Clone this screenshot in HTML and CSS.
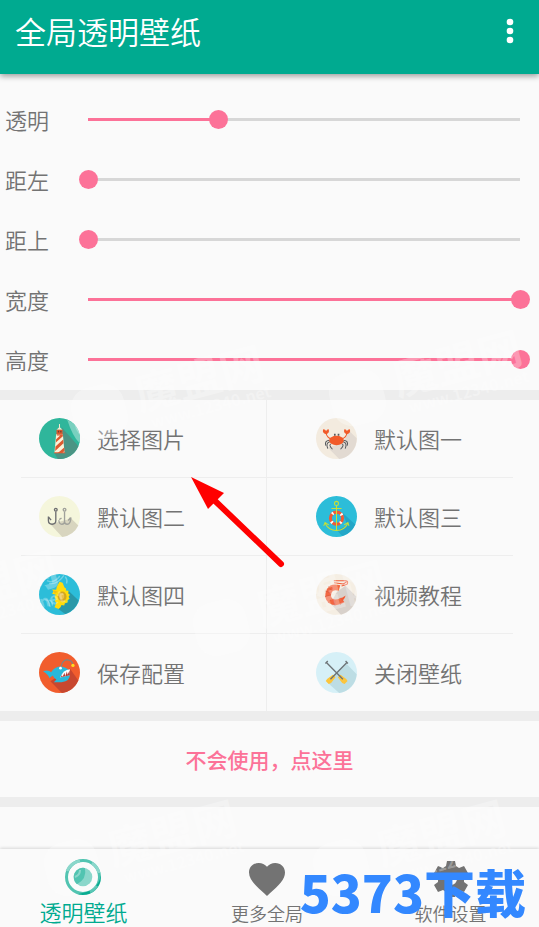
FILE: index.html
```html
<!DOCTYPE html>
<html lang="zh-CN">
<head>
<meta charset="UTF-8">
<meta name="viewport" content="width=device-width, initial-scale=1.0">
<title>全局透明壁纸</title>
<link rel="stylesheet" href="styles.css">
</head>
<body>

<header class="topbar">
  <h1 class="title">全局透明壁纸</h1>
  <button class="more" aria-label="更多">
    <svg width="8" height="28" viewBox="0 0 8 28"><circle cx="4" cy="5" r="3.3"/><circle cx="4" cy="14" r="3.3"/><circle cx="4" cy="23" r="3.3"/></svg>
  </button>
</header>

<main class="content">
  <!-- sliders -->
  <section class="sliders">
    <div class="slider-row"><label for="alpha">透明</label><input type="range" id="alpha" min="0" max="100" value="30" style="--v:.3"></div>
    <div class="slider-row"><label for="left">距左</label><input type="range" id="left" min="0" max="100" value="0" style="--v:0"></div>
    <div class="slider-row"><label for="top">距上</label><input type="range" id="top" min="0" max="100" value="0" style="--v:0"></div>
    <div class="slider-row"><label for="width">宽度</label><input type="range" id="width" min="0" max="100" value="100" style="--v:1"></div>
    <div class="slider-row"><label for="height">高度</label><input type="range" id="height" min="0" max="100" value="100" style="--v:1"></div>
  </section>

  <!-- action grid -->
  <section class="panel">
    <div class="grid">
      <button class="item">
        <svg class="icon" viewBox="0 0 122 122">
          <circle cx="61" cy="61" r="61" fill="#2fb69b"/>
          <path d="M68 28 L117 83 A61 61 0 0 1 56 122 L46 104 L74 100Z" fill="#4b9484"/>
          <path d="M84 5 A61 61 0 0 1 121 75 Q100 55 84 5Z" fill="#79d0bf"/>
          <path d="M61 18v14" stroke="#f3ead0" stroke-width="3"/>
          <path d="M52 35l9-8 9 8z" fill="#f3ead0"/>
          <path d="M52 35h18v13H52z" fill="#e05a2e"/>
          <path d="M56 38h4v5h-4zM63 38h4v5h-4z" fill="#6b4135"/>
          <path d="M51 48h20l5 56H46z" fill="#fbf3d9"/>
          <path d="M53 48h18v6L50 73l1-10 12-11H53zM72 64l1 11-25 23 1-13zM75 88l1 10-7 6H56z" fill="#dd5a30"/>
          <path d="M45 102h33v3H45z" fill="#e05a2e"/>
        </svg>
        <span>选择图片</span>
      </button>
      <button class="item">
        <svg class="icon" viewBox="0 0 122 122">
          <circle cx="61" cy="61" r="61" fill="#f3ebdf"/>
          <path d="M96 36l25 24A61 61 0 0 1 69 122L35 88l48-14z" fill="#e2dad2"/>
          <path d="M47 63Q32 58 30 45M76 63Q90 58 92 45" stroke="#f15a29" stroke-width="3" fill="none"/>
          <path d="M21 34q5-2 9 5 4-7 8-5 3 11-8 14-12-3-9-14zM84 34q5-2 8 5 5-7 9-5 3 11-9 14-11-3-8-14z" fill="#f15a29"/>
          <path d="M56 47v6M67 47v6" stroke="#55585c" stroke-width="5"/>
          <ellipse cx="61" cy="67" rx="22" ry="14" fill="#f15a29"/>
          <path d="M39 66q-14 2-10 16M41 71q-13 3-6 20M45 77q-9 3 4 16M83 66q14 2 10 16M81 71q13 3 6 20M77 77q9 3-4 16" stroke="#55585c" stroke-width="3" fill="none"/>
        </svg>
        <span>默认图一</span>
      </button>
      <button class="item">
        <svg class="icon" viewBox="0 0 122 122">
          <circle cx="61" cy="61" r="61" fill="#f5f6dc"/>
          <path d="M96 67l21 21A61 61 0 0 1 69 122L34 84z" fill="#d8d5bf"/>
          <g fill="none" stroke-width="4">
            <g stroke="#6d6e70"><circle cx="50" cy="41" r="4"/><path d="M50 46v28q0 10-11 10T28 73V61M28 62l8 10"/></g>
            <g stroke="#a0a19b"><circle cx="76" cy="41" r="4"/><path d="M76 46v37M59 72q1 12 9 12t8-8q0 8 8 8 10 0 11-20M94 64l-7 9M60 70l7-4"/></g>
          </g>
        </svg>
        <span>默认图二</span>
      </button>
      <button class="item">
        <svg class="icon" viewBox="0 0 122 122">
          <circle cx="61" cy="61" r="61" fill="#2cbdd9"/>
          <path d="M78 49l39 36A61 61 0 0 1 78 119L62 102l32-14z" fill="#23a6c7"/>
          <circle cx="61" cy="66" r="18" fill="none" stroke="#f15a34" stroke-width="9"/>
          <circle cx="61" cy="66" r="18" fill="none" stroke="#fff" stroke-width="9" stroke-dasharray="5 23.27" stroke-dashoffset="-11.6"/>
          <g fill="none" stroke="#c9df35" stroke-width="3"><circle cx="61" cy="22" r="6"/><path d="M61 28v76M46 37h30M27 81q10 21 34 22 24-1 34-22M23 89l4-10 11 7M84 86l11-7 3 10"/></g>
        </svg>
        <span>默认图三</span>
      </button>
      <button class="item">
        <svg class="icon" viewBox="0 0 122 122">
          <circle cx="61" cy="61" r="61" fill="#2cbdd9"/>
          <path d="M86 48l32 31A61 61 0 0 1 78 119L49 98l38-15z" fill="#2998a8"/>
          <path d="M24 20q20 10 38-14M30 28q26 4 44-24M78 8q8 10 4 20" stroke="#71d2e5" stroke-width="4" fill="none"/>
          <path d="M17 78q12-6 16 20M30 78q10 0 10 16" stroke="#71d2e5" stroke-width="4" fill="none"/>
          <path d="M61 23l9 3 6 14 5 4-1 5 8 1-1 8 5 4-4 6 3 6-6 4 0 7-8 2-2 7-8-2-3 7-6 5-12-5 4-9 2-5-5-4 3-6-4-6 4-7-11-3 4-7-4-6 12 1 2-9z" fill="#ffdb0b"/>
          <path d="M42 48l14 5-9 6z" fill="#efbd1d"/>
          <ellipse cx="69" cy="67" rx="13" ry="15" fill="#d3a623"/>
          <ellipse cx="68" cy="66" rx="7" ry="9" fill="#e9c04a"/>
        </svg>
        <span>默认图四</span>
      </button>
      <button class="item">
        <svg class="icon" viewBox="0 0 122 122">
          <circle cx="61" cy="61" r="61" fill="#f5eee3"/>
          <path d="M88 35l32 32A61 61 0 0 1 74 121L43 88l20-36z" fill="#d8d1cb"/>
          <path d="M70 42Q48 36 40 49q-10 20 4 31 16 10 36-3" stroke="#f26743" stroke-width="17" fill="none"/>
          <path d="M37 37l10 13M28 51l18 5M27 67l18-4M36 86l11-14M56 94l1-17M73 91l-6-15" stroke="#d5583a" stroke-width="2"/>
          <path d="M53 20h36q9 2 3 11L76 36M54 26l27 4 10-7" stroke="#f05c39" stroke-width="3" fill="none"/>
          <path d="M74 73l14-9q-1 9-10 17z" fill="#f15a34"/>
        </svg>
        <span>视频教程</span>
      </button>
      <button class="item">
        <svg class="icon" viewBox="0 0 122 122">
          <circle cx="61" cy="61" r="61" fill="#f15d2d"/>
          <path d="M92 49l25 36A61 61 0 0 1 68 122L34 87z" fill="#c8472f"/>
          <path d="M12 57q16-5 24 3 10-17 30-17 25 4 26 22 2 22-25 25H44l8-8q-8-4-11-12l-10 7q-2-9-19-20z" fill="#29b9db"/>
          <path d="M92 51Q72 52 63 76l28-7z" fill="#fff"/>
          <path d="M91 55l-6 13-2-10-5 14-2-10-6 12-2-5 3-7-6 13 27-6z" fill="#b83b35"/>
          <path d="M66 42q4-18 17-19 16 1 17 14" stroke="#6c8c90" stroke-width="3" fill="none"/>
          <circle cx="101" cy="40" r="5" fill="#ffdc20"/><circle cx="64" cy="48" r="4" fill="#fff"/>
        </svg>
        <span>保存配置</span>
      </button>
      <button class="item">
        <svg class="icon" viewBox="0 0 122 122">
          <circle cx="61" cy="61" r="61" fill="#d6f0f7"/>
          <path d="M90 34l31 32A61 61 0 0 1 69 122L33 90z" fill="#bddde4"/>
          <path d="M31 31l49 50M92 31L43 81M28 34l7-7M88 27l7 7" stroke="#6d7376" stroke-width="4"/>
          <path d="M73 68l17 12 4 6-9 9-7-3-13-17zM50 68L33 80l-4 6 9 9 7-3 13-17z" fill="#fcc53c"/>
          <path d="M69 70l11 11M54 70L43 81" stroke="#6d7376" stroke-width="4"/>
        </svg>
        <span>关闭壁纸</span>
      </button>
    </div>
  </section>

  <section class="panel help"><a href="#help">不会使用，点这里</a></section>
  <section class="panel"></section>
</main>

<!-- bottom tabs -->
<nav class="tabs">
  <a class="tab active" href="#wallpaper">
    <svg width="36" height="36" viewBox="0 0 36 36">
      <circle cx="18" cy="18" r="16.5" fill="none" stroke="#08ab90" stroke-width="3"/>
      <path d="M2 12A17 17 0 0 1 15 2M27 4A17 17 0 0 1 34 14M32 27A17 17 0 0 1 25 33" fill="none" stroke="#5ac6b5" stroke-width="3"/>
      <circle cx="18" cy="18" r="9.3" fill="#5ac6b5"/>
      <path d="M20 9A9.3 9.3 0 0 0 12 25.200Q22 20 20 9Z" fill="#08ab90"/>
      <path d="M10 18q5-2 5-7" fill="none" stroke="#5ac6b5" stroke-width="2"/>
    </svg>
    <span>透明壁纸</span>
  </a>
  <a class="tab" href="#more">
    <svg width="36" height="36" viewBox="0 0 36 36"><path d="M18 35l-2.600-2.400C6 24 0 18.500 0 11.500 0 6 4.300 2 9.800 2c3.200 0 6.200 1.500 8.200 3.800C20 3.500 23 2 26.200 2 31.700 2 36 6 36 11.500c0 7-6 12.500-15.400 21.100z" fill="#737373"/></svg>
    <span>更多全局</span>
  </a>
  <a class="tab" href="#settings">
    <svg width="36" height="36" viewBox="0 0 36 36"><path fill="#737373" fill-rule="evenodd" d="M14 0h8l1 5 3 2 5-2 4 7-4 3v6l4 3-4 7-5-2-3 2-1 5h-8l-1-5-3-2-5 2-4-7 4-3v-6l-4-3 4-7 5 2 3-2zM18 12a6 6 0 1 0 0 12 6 6 0 0 0 0-12z"/></svg>
    <span>软件设置</span>
  </a>
  <div class="brand">5373下载</div>
</nav>

<svg class="arrow" width="96" height="92" viewBox="0 0 96 92"><path d="M22 21L91 87" stroke="#f00" stroke-width="6" stroke-linecap="round"/><path d="M1 0l33 16-16 16z" fill="#f00"/></svg>

<!-- watermark stamps -->
<div class="marks" aria-hidden="true">
  <div class="mark m1"><i></i><p>魔盟网<small>www.12340.net</small></p></div>
  <div class="mark m2"><i></i><p>魔盟网<small>www.12340.net</small></p></div>
  <div class="mark m3"><i></i><p>魔盟网<small>www.12340.net</small></p></div>
  <div class="mark m4"><i></i><p>魔盟网<small>www.12340.net</small></p></div>
  <div class="mark m5"><i></i><p>魔盟网<small>www.12340.net</small></p></div>
  <div class="mark m6"><i></i><p>魔盟网<small>www.12340.net</small></p></div>
</div>

</body>
</html>
```
FILE: styles.css
```css
:root{
  --green:#00aa90;
  --pink:#fc7298;
  --bg:#fafafa;
  --gap:#ededed;
  --line:#eeeeee;
  --txt:#737373;
  font-family:"Noto Sans CJK SC", sans-serif;
}

*{box-sizing:border-box;margin:0;padding:0}

body{
  background:var(--bg);
  color:var(--txt);
  min-height:100vh;
  display:flex;
  flex-direction:column;
  position:relative;
  overflow-x:hidden;
}
button{background:none;border:none;font:inherit;color:inherit;cursor:pointer}
a{color:inherit;text-decoration:none}

/* top bar */
.topbar{
  height:74px;
  padding:0 16px 12px 15px;
  display:flex;
  align-items:center;
  justify-content:space-between;
  background:var(--green);
  color:#fff;
  box-shadow:0 2px 6px rgba(0,0,0,.4);
}
.title{font-size:31px;font-weight:350;line-height:40px}
.more{padding:0 9px;display:flex}
.more svg{fill:#fff}

.content{flex:1;display:flex;flex-direction:column}

/* sliders */
.sliders{padding:15px 0 1px}
.slider-row{
  height:60px;
  padding:0 9px 0 5px;
  display:flex;
  align-items:center;
}
.slider-row label{width:74px;font-size:22px;font-weight:350;line-height:32px}
.slider-row input{
  flex:1;
  min-width:0;
  height:19px;
  appearance:none;
  -webkit-appearance:none;
  background:
    linear-gradient(var(--pink),var(--pink)) 9px 8px / calc((100% - 19px) * var(--v)) 3px no-repeat,
    linear-gradient(#d7d7d7,#d7d7d7) 9px 8px / calc(100% - 19px) 3px no-repeat;
}
.slider-row input::-webkit-slider-thumb{
  -webkit-appearance:none;
  width:19px;height:19px;
  border-radius:50%;
  background:var(--pink);
}

/* panels */
.panel{border-top:10px solid var(--gap)}
.grid{
  margin:0 26px 0 21px;
  display:grid;
  grid-template-columns:1fr 1fr;
}
.item{
  height:78px;
  display:flex;
  align-items:center;
  gap:17px;
  border-bottom:1px solid var(--line);
  font-size:22px;
  font-weight:350;
  line-height:32px;
}
.item span{padding-bottom:2px}
.item:nth-child(odd){padding-left:18px;border-right:1px solid var(--line)}
.item:nth-child(even){padding-left:49px}
.item:nth-last-child(-n+2){height:77px;border-bottom:none}
.icon{width:41px;height:41px;flex:none}

.help{
  height:86px;
  display:flex;
  align-items:center;
  justify-content:center;
  color:var(--pink);
  font-size:21px;
  font-weight:500;
}

/* bottom tabs */
.tabs{
  height:78px;
  padding-right:5px;
  display:grid;
  grid-template-columns:5fr 6fr 5fr;
  position:relative;
  box-shadow:0 -1px 3px rgba(0,0,0,.14);
}
.tab{
  display:flex;
  flex-direction:column;
  align-items:center;
  padding-top:12px;
  font-size:18px;
  font-weight:350;
  line-height:32px;
}
.tab.active{
  padding-top:10px;
  color:var(--green);
  font-size:22px;
}
.brand{
  position:absolute;
  right:13px;bottom:6px;
  z-index:2;
  color:#3388ff;
  font-size:51px;
  font-weight:900;
  line-height:60px;
}

.arrow{position:absolute;left:190px;top:477px;z-index:2}

/* watermarks */
.marks{position:absolute;inset:0;overflow:hidden;pointer-events:none}
.mark{
  position:absolute;
  display:flex;
  align-items:center;
  gap:12px;
  color:rgba(255,255,255,.3);
  transform:rotate(-15deg);
}
.mark i{width:54px;height:54px;border-radius:20px;background:rgba(255,255,255,.3)}
.mark p{font-size:44px;font-weight:700;line-height:44px}
.mark small{display:block;font-size:16px;line-height:20px;text-align:right}
.m1{left:70px;top:362px}
.m2{left:328px;top:347px}
.m3{left:-136px;top:567px}
.m4{left:192px;top:577px}
.m5{left:43px;top:817px}
.m6{left:312px;top:817px}
```
